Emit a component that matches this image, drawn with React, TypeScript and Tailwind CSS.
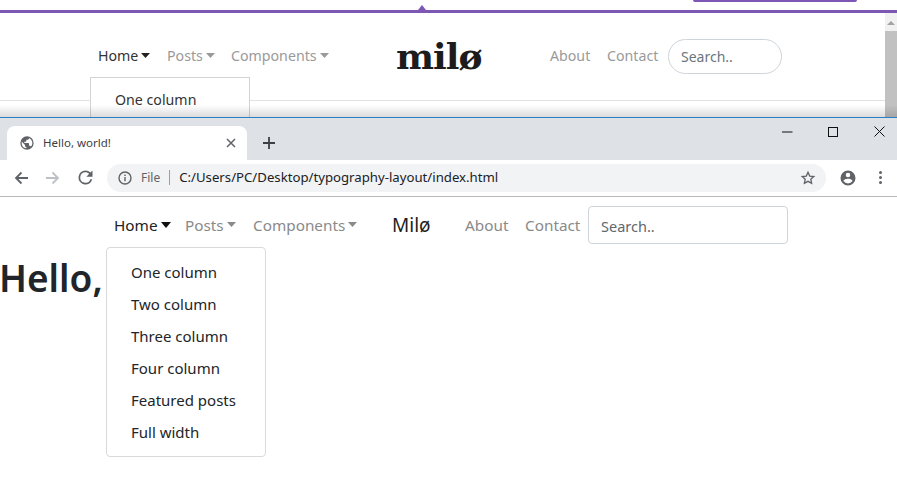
import React from "react";

const sans = "font-['Noto_Sans','Open_Sans',sans-serif]";
const Caret = ({ color, w = 9, h = 5 }: { color: string; w?: number; h?: number }) => (
  <svg width={w} height={h} viewBox="0 0 9 5" preserveAspectRatio="none" className="ml-[3px] mb-[1px] inline-block">
    <path d="M0 0h9L4.500 5z" fill={color} />
  </svg>
);

const dropdownItems = ["One column", "Two column", "Three column", "Four column", "Featured posts", "Full width"];

function OldPage() {
  return (
    <div className={`relative h-[117px] overflow-hidden bg-white flex flex-col ${sans}`}>
      <div className="h-[10px] flex justify-between shrink-0 relative">
        <div className="ml-[418px] mt-[5px] w-0 h-0 border-x-[4px] border-x-transparent border-b-[5px] border-b-[#7e57b5]" />
        <div className="mr-[40px] w-[164px] h-[2px] rounded-b bg-[#7e57b5]" />
      </div>
      <div className="h-[3px] bg-[#7e57b5] shrink-0" />
      <div className="flex flex-1 min-h-0">
        <div className="flex-1 min-w-0 flex flex-col">
          <div className="h-[88px] shrink-0 border-b border-[#e2e2e2] flex items-start pt-[26px] pl-[98px] text-[14.200px] leading-[34px] text-[#9a9a9a]">
            <span className="flex items-center h-[34px] text-[#333333] w-[69px]">Home<Caret color="#222222" /></span>
            <span className="flex items-center h-[34px] w-[64px]">Posts<Caret color="#9a9a9a" /></span>
            <span className="flex items-center h-[34px] w-[165px]">Components<Caret color="#9a9a9a" /></span>
            <span className="font-['DejaVu_Serif',serif] font-bold text-[36px] leading-[34px] tracking-[-1px] text-[#1c1c1c] w-[154px]">milø</span>
            <span className="w-[57px]">About</span>
            <span className="w-[61px]">Contact</span>
            <div className="w-[114px] h-[35px] rounded-full border border-[#ced4da] pl-[12px] leading-[33px] text-[14px] text-[#6c757d]">Search..</div>
          </div>
          <div className="flex-1 bg-white" />
        </div>
        <div className="w-[12px] shrink-0 bg-[#f1f1f1] flex flex-col items-center">
          <div className="h-[18px] shrink-0 flex items-center justify-center pt-[2px]">
            <div className="w-0 h-0 border-x-[4px] border-x-transparent border-b-[4px] border-b-[#a3a3a3]" />
          </div>
          <div className="flex-1 w-full bg-[#c1c1c1]" />
        </div>
      </div>
      <div className="absolute left-[90px] top-[77px] w-[160px] h-[80px] border border-[#d4d4d4] bg-white pl-[24px] pt-[12px] text-[14.200px] leading-[20px] text-[#333333]">One column</div>
      <div className="absolute left-0 right-0 bottom-0 h-[12px] bg-gradient-to-b from-transparent to-[#00000024] pointer-events-none" />
    </div>
  );
}

function TabBar() {
  return (
    <div className="h-[43px] bg-[#dee1e6] flex items-end border-t-[1px] border-[#2a7fc4]">
      <div className="ml-[7px] w-[240px] h-[34px] bg-white rounded-t-lg flex items-center pl-[12px] pr-[9px] font-['Noto_Sans',sans-serif] text-[11.500px] text-[#3c4043]">
        <svg width="16" height="16" viewBox="0 0 24 24" className="mr-[8px] shrink-0">
          <path fill="#5f6368" d="M12 2a10 10 0 1 0 0 20 10 10 0 0 0 0-20zM4 12c0-.6.1-1.200.2-1.800L9 15v1c0 1.100.9 2 2 2v1.900A8 8 0 0 1 4 12zm13.900 5.400c-.3-.8-1-1.400-1.900-1.400h-1v-3c0-.6-.4-1-1-1H8v-2h2c.6 0 1-.4 1-1V7h2c1.100 0 2-.9 2-2v-.4a8 8 0 0 1 2.900 12.800z" />
        </svg>
        <span className="flex-1">Hello, world!</span>
        <svg width="10" height="10" viewBox="0 0 10 10" className="mr-[2px]"><path d="M1 1l8 8M9 1l-8 8" stroke="#5f6368" strokeWidth="1.500" /></svg>
      </div>
      <div className="h-[34px] w-[44px] flex items-center justify-center">
        <svg width="12" height="12" viewBox="0 0 12 12"><path d="M6 0v12M0 6h12" stroke="#3c4043" strokeWidth="1.800" /></svg>
      </div>
      <div className="flex-1" />
      <div className="self-start flex items-center mt-[8px] pr-[12px]">
        <svg width="11" height="11" viewBox="0 0 11 11" className="mr-[35px]"><path d="M0 6h10.500" stroke="#111" strokeWidth="1" /></svg>
        <svg width="10" height="10" viewBox="0 0 10 10" className="mr-[36px]"><rect x=".5" y=".5" width="9" height="9" fill="none" stroke="#111" /></svg>
        <svg width="11" height="11" viewBox="0 0 11 11"><path d="M.5.500l10 10M10.500.5l-10 10" stroke="#111" strokeWidth="1" /></svg>
      </div>
    </div>
  );
}

function Toolbar() {
  return (
    <div className="h-[37px] bg-white border-b border-[#b8b8b8] flex items-center pb-[1px] font-['Noto_Sans',sans-serif]">
      <div className="w-[107px] shrink-0 flex items-center pl-[14px]">
        <svg width="14" height="14" viewBox="0 0 14 14" className="mr-[18px]"><path d="M14 7H2M7.500 1.500L2 7l5.500 5.500" fill="none" stroke="#5f6368" strokeWidth="1.800" /></svg>
        <svg width="14" height="14" viewBox="0 0 14 14" className="mr-[15px]"><path d="M0 7h12M6.500 1.500L12 7l-5.500 5.500" fill="none" stroke="#bdc1c6" strokeWidth="1.800" /></svg>
        <svg width="21" height="21" viewBox="0 0 24 24"><path fill="#5f6368" d="M17.650 6.350A7.960 7.960 0 0 0 12 4a8 8 0 1 0 7.730 10h-2.080A6 6 0 1 1 12 6c1.660 0 3.140.69 4.220 1.780L13 11h7V4l-2.350 2.350z" /></svg>
      </div>
      <div className="w-[719px] h-[28px] rounded-full bg-[#f1f3f4] flex items-center pl-[11px] pr-[10px] shrink-0">
        <svg width="14" height="14" viewBox="0 0 14 14" className="mr-[9px]"><circle cx="7" cy="7" r="6" fill="none" stroke="#5f6368" strokeWidth="1.400" /><path d="M7 6v4.200M7 3.500v1.400" stroke="#5f6368" strokeWidth="1.400" /></svg>
        <span className="text-[#5f6368] text-[12px]">File</span>
        <span className="w-px h-[15px] bg-[#9aa0a6] ml-[9px] mr-[9px]" />
        <span className="flex-1 text-[#202124] text-[13.200px]">C:/Users/PC/Desktop/typography-layout/index.html</span>
        <svg width="16" height="16" viewBox="0 0 24 24"><path fill="none" stroke="#5f6368" strokeWidth="2" d="M12 3.500l2.600 5.600 6.100.7-4.500 4.200 1.200 6-5.400-3-5.400 3 1.200-6-4.500-4.200 6.100-.7z" /></svg>
      </div>
      <svg width="18" height="18" viewBox="0 0 24 24" className="ml-[13px] shrink-0"><path fill="#5f6368" d="M12 2a10 10 0 1 0 0 20 10 10 0 0 0 0-20zm0 3a3 3 0 1 1 0 6 3 3 0 0 1 0-6zm0 14.200a7.200 7.200 0 0 1-6-3.220c.03-1.990 4-3.080 6-3.080s5.970 1.090 6 3.080a7.200 7.200 0 0 1-6 3.220z" /></svg>
      <div className="ml-[22px] flex flex-col gap-[2px] shrink-0">
        <span className="w-[3px] h-[3px] rounded-full bg-[#5f6368]" />
        <span className="w-[3px] h-[3px] rounded-full bg-[#5f6368]" />
        <span className="w-[3px] h-[3px] rounded-full bg-[#5f6368]" />
      </div>
    </div>
  );
}

function NewPage() {
  return (
    <div className="relative flex-1 bg-white font-['Noto_Sans','Open_Sans',sans-serif]">
      <div className="flex items-start pt-[9px] pl-[114px] text-[15.300px] leading-[38px] text-[#8a8a8a]">
        <span className="flex items-center text-[#222222] w-[71px] h-[38px]">Home<Caret color="#111111" w={10} h={6} /></span>
        <span className="flex items-center w-[68px] h-[38px]">Posts<Caret color="#8a8a8a" /></span>
        <span className="flex items-center w-[139px] h-[38px]">Components<Caret color="#8a8a8a" /></span>
        <span className="text-[#1d1d1d] text-[19px] w-[73px]">Milø</span>
        <span className="w-[60px]">About</span>
        <span className="w-[63px]">Contact</span>
        <div className="w-[200px] h-[38px] rounded border border-[#ced4da] pl-[12px] text-[14.500px] text-[#5f676e] leading-[38px]">Search..</div>
      </div>
      <h1 className="mt-[12px] -ml-px text-[37px] leading-[44px] font-semibold text-[#212529]">Hello,</h1>
      <div className="absolute left-[106px] top-[50px] w-[160px] h-[210px] rounded border border-[#d9d9d9] bg-white pt-[8px] text-[15px] leading-[32px] text-[#212529]">
        {dropdownItems.map((t) => (
          <div key={t} className="pl-[24px]">{t}</div>
        ))}
      </div>
    </div>
  );
}

export default function App() {
  return (
    <div className="w-[897px] h-[491px] overflow-hidden flex flex-col bg-white">
      <OldPage />
      <TabBar />
      <Toolbar />
      <NewPage />
    </div>
  );
}
